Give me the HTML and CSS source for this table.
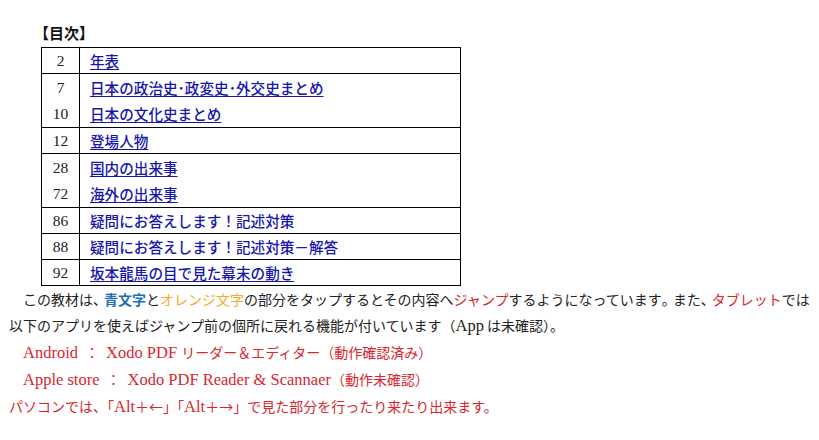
FILE: index.html
```html
<!DOCTYPE html>
<html lang="ja">
<head>
<meta charset="utf-8">
<link rel="stylesheet" href="styles.css">
</head>
<body>
<div class="page">
  <h2 class="toc-title">【目次】</h2>
  <table class="toc">
    <tr><td class="num">2</td><td class="ttl"><a>年表</a></td></tr>
    <tr class="grp"><td class="num">7</td><td class="ttl"><a>日本の政治史･政変史･外交史まとめ</a></td></tr>
    <tr class="cont"><td class="num">10</td><td class="ttl"><a>日本の文化史まとめ</a></td></tr>
    <tr><td class="num">12</td><td class="ttl"><a>登場人物</a></td></tr>
    <tr class="grp"><td class="num">28</td><td class="ttl"><a>国内の出来事</a></td></tr>
    <tr class="cont"><td class="num">72</td><td class="ttl"><a>海外の出来事</a></td></tr>
    <tr><td class="num">86</td><td class="ttl"><a class="plain">疑問にお答えします！記述対策</a></td></tr>
    <tr><td class="num">88</td><td class="ttl"><a class="plain">疑問にお答えします！記述対策－解答</a></td></tr>
    <tr><td class="num">92</td><td class="ttl"><a>坂本龍馬の目で見た幕末の動き</a></td></tr>
  </table>
  <div class="text">
    <p class="line indent">この教材は<span class="p">、</span><span class="blue">青文字</span>と<span class="orange">オレンジ文字</span>の部分をタップするとその内容へ<span class="red">ジャンプ</span>するようになっています<span class="p">。</span>また<span class="p">、</span><span class="red">タブレット</span>では</p>
    <p class="line">以下のアプリを使えばジャンプ前の個所に戻れる機能が付いています（<span class="lat">App</span> は未確認）。</p>
    <p class="line indent red"><span class="lat">Android</span><span class="colon">：</span><span class="lat">Xodo PDF </span>リーダー＆エディター（動作確認済み）</p>
    <p class="line indent red"><span class="lat">Apple store</span><span class="colon">：</span><span class="lat">Xodo PDF Reader &amp; Scannaer</span>（動作未確認）</p>
    <p class="line red">パソコンでは、「<span class="lat">Alt</span>＋←」「<span class="lat">Alt</span>＋→」で見た部分を行ったり来たり出来ます。</p>
  </div>
</div>
</body>
</html>
```
FILE: styles.css
```css
html, body {
  margin: 0;
  padding: 0;
  background: #ffffff;
}
body {
  font-family: "Noto Sans CJK JP", sans-serif;
  color: #222;
}
.page {
  padding: 25px 0 0 9px;
}
.toc-title {
  margin: 0 0 0 25px;
  font-family: "Noto Sans CJK JP", sans-serif;
  font-size: 15px;
  font-weight: bold;
  line-height: 16px;
  height: 22px;
  color: #111;
}
.toc {
  margin-left: 32px;
  width: 420px;
  border-collapse: collapse;
  border: 1px solid #000;
}
.toc td {
  height: 25px;
  padding: 0;
  border-top: 1px solid #000;
  line-height: 25px;
}
.toc tr.grp td {
  height: 26px;
}
.toc tr.cont td {
  border-top: none;
  height: 27px;
}
.toc td.num {
  width: 37px;
  border-right: 1px solid #000;
  text-align: center;
  font-family: "Liberation Serif", serif;
  font-size: 15.5px;
  color: #222;
}
.toc td.ttl {
  padding-left: 10px;
  font-family: "Noto Sans CJK JP", sans-serif;
  font-size: 14.6px;
}
.toc a {
  color: #1616ac;
  font-weight: 500;
  text-decoration: underline;
  text-underline-offset: 2px;
}
.toc a.plain {
  text-decoration: none;
}
.text {
  font-size: 14px;
}
.line {
  margin: 0;
  line-height: 26px;
  white-space: nowrap;
  font-family: "Noto Sans CJK JP", sans-serif;
}
.indent {
  padding-left: 14px;
}
.lat {
  font-family: "Liberation Serif", serif;
  font-size: 16.5px;
}
.colon {
  padding: 0 7px;
}
.p {
  letter-spacing: -3px;
}
.blue {
  color: #1e6fb6;
  font-weight: bold;
}
.orange {
  color: #f2ad2a;
}
.red {
  color: #d9262f;
}
```
